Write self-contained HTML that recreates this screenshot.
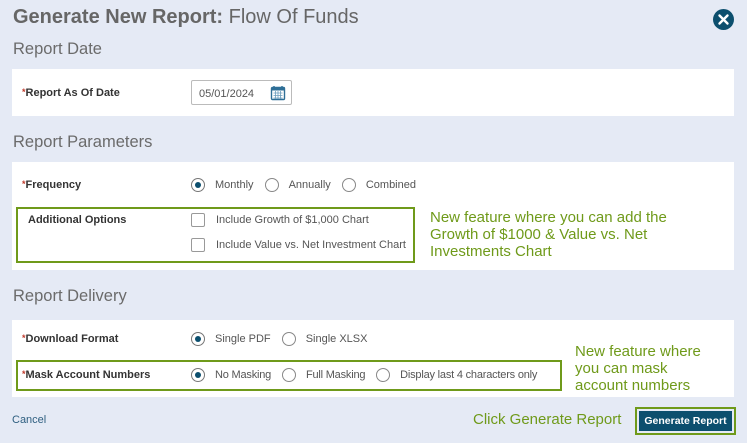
<!DOCTYPE html>
<html><head><style>
*{margin:0;padding:0;box-sizing:border-box}
body{width:747px;height:443px;background:#e5eaf5;font-family:"Liberation Sans",sans-serif;position:relative;overflow:hidden;color:#333}
.a{position:absolute}
.h1{left:13px;top:6px;font-size:20px;color:#666;white-space:nowrap}
.h2{font-size:16.5px;color:#6b6b6b;left:13px}
.panel{background:#fff;left:12px;width:722px}
.lbl{font-size:11px;font-weight:bold;color:#333}
.st{color:#c0392b;font-size:9px;vertical-align:top}
.opt{font-size:11px;color:#555;white-space:nowrap}
.r{display:inline-block;width:14px;height:14px;border:1.3px solid #888;border-radius:50%;vertical-align:middle;margin-right:10px;position:relative}
.r.on{border-color:#777}
.r.on::after{content:"";position:absolute;left:3px;top:3px;width:6px;height:6px;border-radius:50%;background:#0c4f6e}
.sp{margin-left:8px}
.cb{display:inline-block;width:14px;height:14px;border:1.2px solid #999;border-radius:2px;vertical-align:middle;margin-right:11px}
.g{border:2px solid #6f9a1a}
.gt{color:#6f9a1a;font-size:15px;line-height:17px;white-space:nowrap}
</style></head><body>
<div class="a h1"><b style="font-weight:bold">Generate New Report:</b> Flow Of Funds</div>
<div class="a" style="left:713px;top:9px;width:21px;height:21px;border-radius:50%;background:#0c4f6e">
<svg width="21" height="21"><path d="M6.5 6.5L14.5 14.5M14.5 6.5L6.5 14.5" stroke="#fff" stroke-width="2.4" stroke-linecap="round"/></svg></div>
<div class="a h2" style="top:40px">Report Date</div>
<div class="a panel" style="top:69px;height:47px"></div>
<div class="a lbl" style="left:22px;top:87px"><span class="st">*</span>Report As Of Date</div>
<div class="a" style="left:191px;top:80px;width:101px;height:25px;border:1px solid #bbb;border-radius:2px;font-size:11px;color:#555;padding:7px 0 0 7px">05/01/2024
<svg class="a" style="left:78px;top:4px" width="16" height="16"><rect x="1.5" y="2.5" width="13" height="12" rx="1" fill="none" stroke="#2f6f97" stroke-width="1.4"/><rect x="1.5" y="2.5" width="13" height="3" fill="#2f6f97"/><path d="M4 1v3M12 1v3" stroke="#2f6f97" stroke-width="1.4"/><path d="M3.5 8h9M3.5 10.5h9M3.5 13h9M5.5 6v8M8 6v8M10.5 6v8" stroke="#6a9cbc" stroke-width=".8"/></svg></div>
<div class="a h2" style="top:133px">Report Parameters</div>
<div class="a panel" style="top:162px;height:108px"></div>
<div class="a lbl" style="left:22px;top:179px"><span class="st">*</span>Frequency</div>
<div class="a opt" style="left:191px;top:178px"><span class="r on"></span>Monthly <span class="r sp"></span>Annually <span class="r sp"></span>Combined</div>
<div class="a g" style="left:16px;top:207px;width:399px;height:56px"></div>
<div class="a lbl" style="left:28px;top:214px">Additional Options</div>
<div class="a opt" style="left:191px;top:213px"><span class="cb"></span>Include Growth of $1,000 Chart</div>
<div class="a opt" style="left:191px;top:238px"><span class="cb"></span>Include Value vs. Net Investment Chart</div>
<div class="a gt" style="left:430px;top:209px">New feature where you can add the<br>Growth of $1000 &amp; Value vs. Net<br>Investments Chart</div>
<div class="a h2" style="top:287px">Report Delivery</div>
<div class="a panel" style="top:320px;height:77px"></div>
<div class="a lbl" style="left:22px;top:333px"><span class="st">*</span>Download Format</div>
<div class="a opt" style="left:191px;top:332px"><span class="r on"></span>Single PDF <span class="r sp"></span>Single XLSX</div>
<div class="a g" style="left:16px;top:360px;width:546px;height:31px"></div>
<div class="a lbl" style="left:22px;top:369px"><span class="st">*</span>Mask Account Numbers</div>
<div class="a opt" style="left:191px;top:368px;letter-spacing:-0.2px"><span class="r on"></span>No Masking <span class="r sp"></span>Full Masking <span class="r sp"></span>Display last 4 characters only</div>
<div class="a gt" style="left:575px;top:343px">New feature where<br>you can mask<br>account numbers</div>
<div class="a" style="left:12px;top:414px;font-size:11px;color:#2f5f80">Cancel</div>
<div class="a gt" style="left:473px;top:411px;font-size:15px">Click Generate Report</div>
<div class="a g" style="left:635px;top:407px;width:101px;height:28px;padding:2px"><div style="background:#0c4f6e;color:#fff;font-size:10.5px;font-weight:bold;height:100%;text-align:center;line-height:20px">Generate Report</div></div>
</body></html>
